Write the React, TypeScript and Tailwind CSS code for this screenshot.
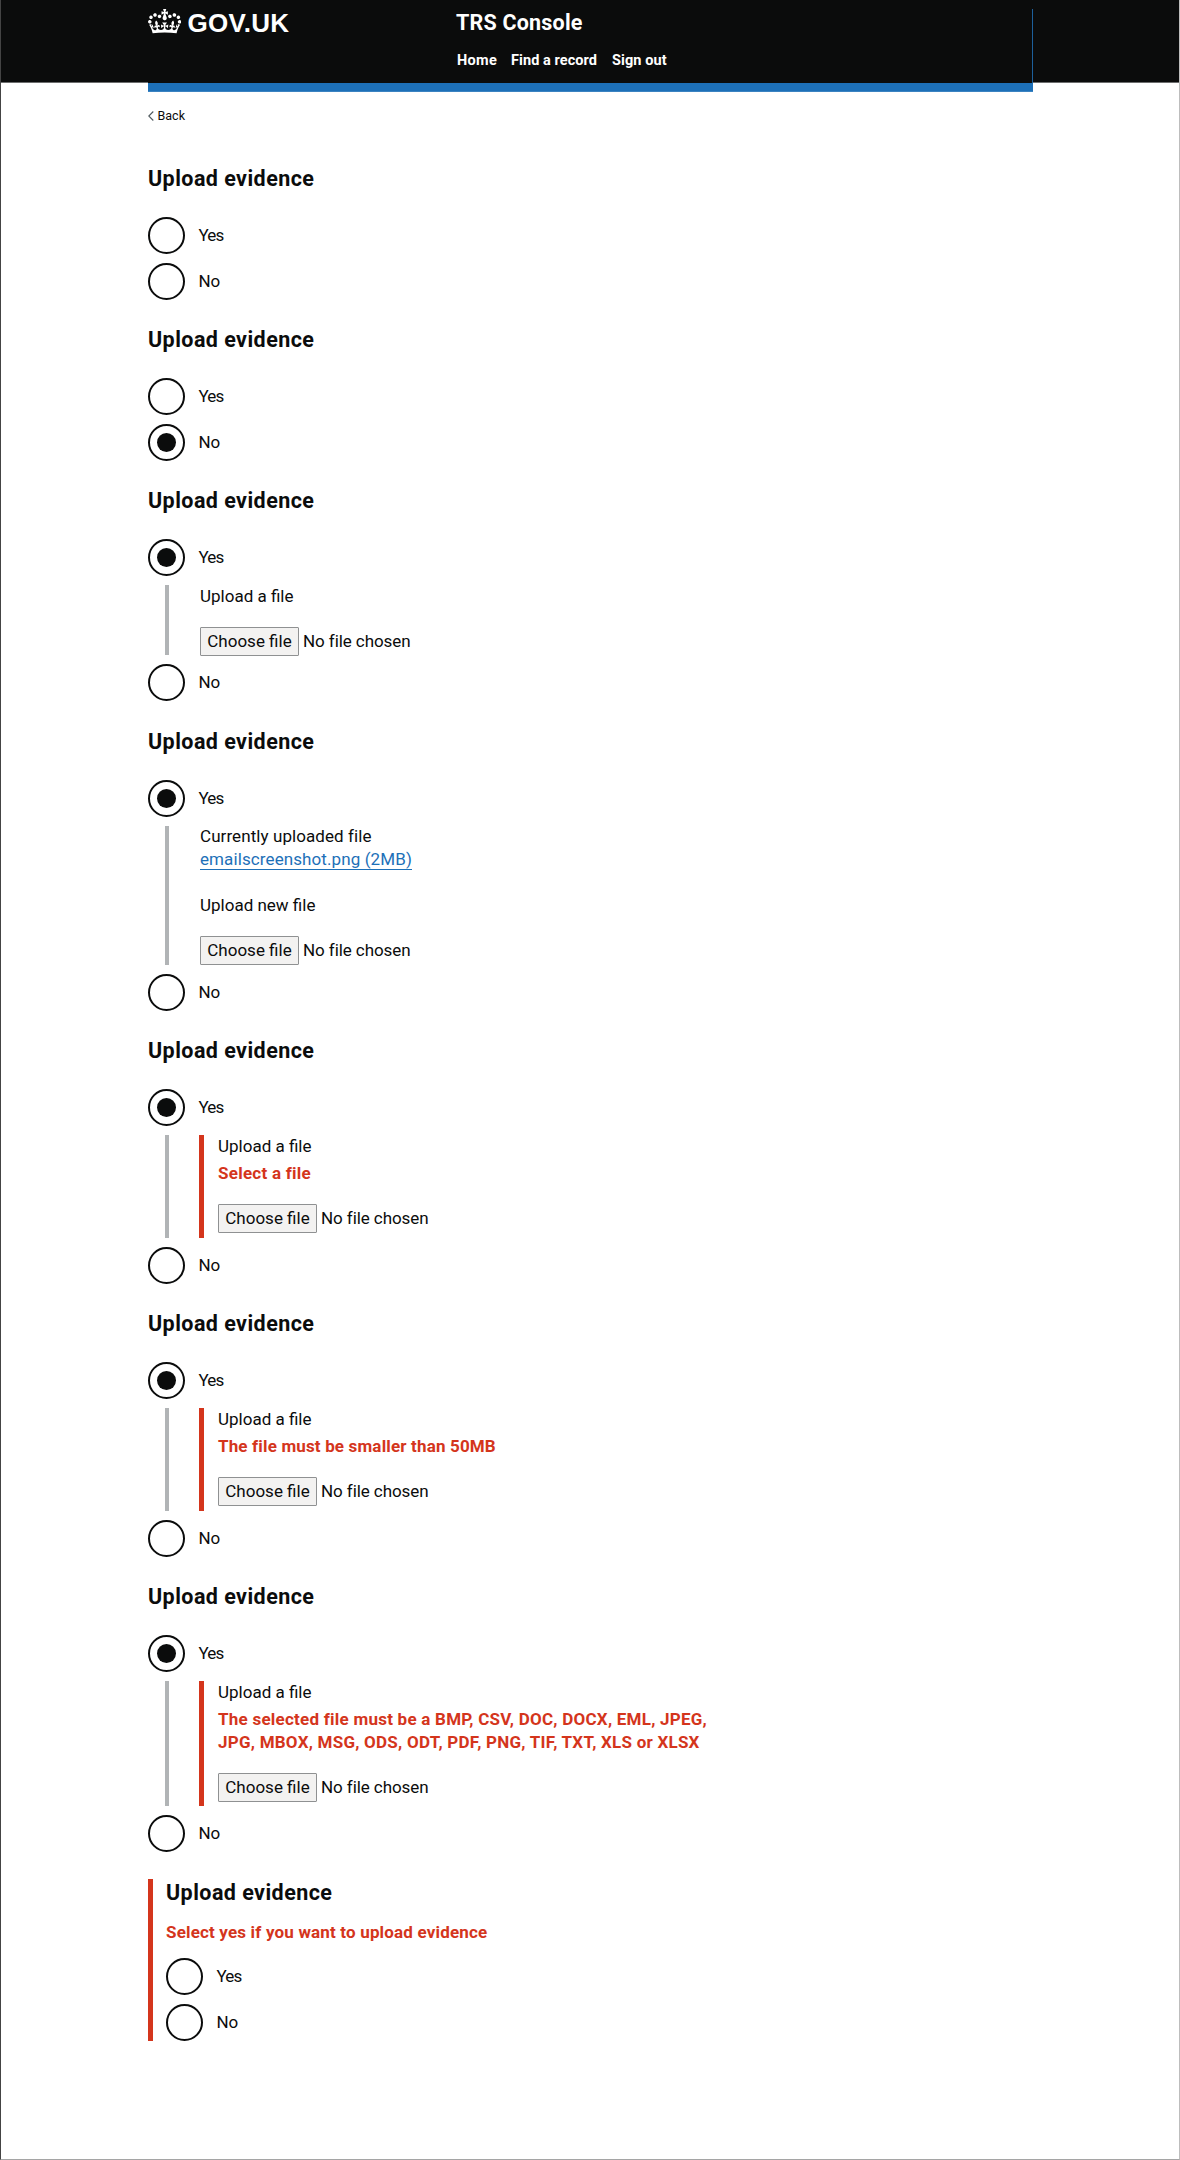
import type { ReactNode } from "react";

function Crown() {
  return (
    <svg viewBox="0 0 132 97" className="h-[24.5px] w-[33.4px] shrink-0" fill="currentColor" aria-hidden="true">
      <path d="M25 30.2c3.5 1.5 7.7-.2 9.1-3.7 1.5-3.6-.2-7.8-3.9-9.2-3.6-1.4-7.6.3-9.1 3.9-1.4 3.5.3 7.5 3.9 9zM9 39.5c3.6 1.5 7.8-.2 9.2-3.7 1.5-3.6-.2-7.8-3.9-9.1-3.6-1.5-7.6.2-9.1 3.8-1.4 3.5.3 7.5 3.8 9zM4.4 57.2c3.5 1.5 7.7-.2 9.1-3.8 1.5-3.6-.2-7.7-3.9-9.1-3.5-1.5-7.6.3-9.1 3.8-1.4 3.5.3 7.6 3.9 9.1zm38.3-21.4c3.5 1.5 7.7-.2 9.1-3.8 1.5-3.6-.2-7.7-3.9-9.1-3.6-1.5-7.6.3-9.1 3.8-1.3 3.6.4 7.7 3.9 9.1zm64.4-5.6c-3.6 1.5-7.8-.2-9.1-3.7-1.5-3.6.2-7.8 3.8-9.2 3.6-1.4 7.7.3 9.2 3.9 1.3 3.5-.4 7.5-3.9 9zm15.9 9.3c-3.6 1.5-7.7-.2-9.1-3.7-1.5-3.6.2-7.8 3.7-9.1 3.6-1.5 7.7.2 9.2 3.8 1.5 3.5-.3 7.5-3.8 9zm4.7 17.7c-3.6 1.5-7.8-.2-9.2-3.8-1.5-3.6.2-7.7 3.9-9.1 3.6-1.5 7.7.3 9.2 3.8 1.3 3.5-.4 7.6-3.9 9.1zM89.3 35.8c-3.6 1.5-7.8-.2-9.2-3.8-1.4-3.6.2-7.7 3.9-9.1 3.6-1.5 7.7.3 9.2 3.8 1.4 3.6-.3 7.7-3.9 9.1zM69.7 17.7l8.9 4.7V9.3l-8.9 2.8c-.2-.3-.5-.6-.9-.9L72.4 0H59.6l3.5 11.2c-.3.3-.6.5-.9.9l-8.8-2.8v13.1l8.8-4.7c.3.3.6.7.9.9l-5 15.4v.1c-.2.8-.4 1.6-.4 2.4 0 4.1 3.1 7.5 7 8.1h.2c.3 0 .7.1 1 .1.4 0 .7 0 1-.1h.2c4-.6 7.1-4.1 7.1-8.1 0-.8-.1-1.7-.4-2.4V34l-5.1-15.4c.4-.2.7-.6 1-.9zM66 92.8c16.9 0 32.8 1.1 47.1 3.2 4-16.9 8.9-26.7 14-33.5l-9.6-3.4c1 4.9 1.1 7.2 0 10.2-1.5-1.4-3-4.3-4.2-8.7L108.6 76c2.8-2 5-3.2 7.5-3.3-4.4 9.4-10 11.9-13.6 11.2-4.3-.8-6.3-4.6-5.6-7.9 1-4.7 5.7-5.9 8-.5 4.3-8.7-3-11.4-7.6-8.8 7.1-7.2 7.9-13.5 2.1-21.1-8 6.1-8.1 12.3-4.5 20.8-4.7-5.4-12.1-2.5-9.5 6.2 3.4-5.2 7.9-2 7.2 3.1-.6 4.3-6.4 7.8-13.5 7.2-10.3-.9-10.9-8-11.2-13.8 2.5-.5 7.1 1.8 11 7.3L80.2 60c-4.1 4.4-8 5.3-12.3 5.4 1.4-4.4 8-11.6 8-11.6H55.5s6.4 7.2 7.9 11.6c-4.2-.1-8-1-12.3-5.4l1.4 16.4c3.9-5.5 8.5-7.7 10.9-7.3-.3 5.8-.9 12.8-11.1 13.8-7.2.6-12.9-2.9-13.5-7.2-.7-5 3.8-8.3 7.1-3.1 2.7-8.7-4.6-11.6-9.4-6.2 3.7-8.5 3.6-14.7-4.6-20.8-5.8 7.6-5 13.9 2.2 21.1-4.7-2.6-11.9.1-7.7 8.8 2.3-5.5 7.1-4.2 8.1.5.7 3.3-1.3 7.1-5.7 7.9-3.5.7-9-1.8-13.5-11.2 2.5.1 4.7 1.3 7.5 3.3l-4.7-15.4c-1.2 4.4-2.7 7.2-4.3 8.7-1.1-3-.9-5.3 0-10.2l-9.5 3.4c5 6.9 9.9 16.7 14 33.5 14.8-2.1 30.8-3.2 47.7-3.2z" />
    </svg>
  );
}

function Header() {
  return (
    <header className="text-white">
      <div className="h-[83px] border-b border-[#6d6e6e] bg-[#0b0c0c]">
        <div className="ml-[147px] h-[83px] w-[885px] bg-[#0b0c0c] pt-[9px]">
          <div className="flex h-[74px] border-r border-[#1d609b]">
            <a className="flex w-[308px] items-start">
              <Crown />
              <span className="ml-[6px] font-['Liberation_Sans',sans-serif] text-[26px] leading-[28px] font-bold tracking-[0.3px]">
                GOV.UK
              </span>
            </a>
            <div>
              <div className="text-[21.5px] leading-[28px] font-bold tracking-[0.2px]">TRS Console</div>
              <nav className="mt-[14px] flex text-[14.5px] leading-[20px] font-bold">
                <a className="ml-px w-[54px] tracking-[0.35px]">Home</a>
                <a className="w-[101px] tracking-[0.07px]">Find a record</a>
                <a className="tracking-[0.1px]">Sign out</a>
              </nav>
            </div>
          </div>
        </div>
      </div>
      <div className="ml-[147px] h-[9px] w-[885px] border-b border-[#3b83c1] bg-[#1d70b8]" />
    </header>
  );
}

function Radio({ label, checked = false }: { label: string; checked?: boolean }) {
  return (
    <label className="flex h-[37px] items-center gap-[13.5px]">
      <span className="flex size-[37px] items-center justify-center rounded-full border-2 border-[#0b0c0c]">
        {checked && <span className="size-[18.5px] rounded-full bg-[#0b0c0c]" />}
      </span>
      <span className={label === "Yes" ? "tracking-[-0.8px]" : "tracking-[-0.2px]"}>{label}</span>
    </label>
  );
}

function FileInput() {
  return (
    <div className="flex h-[29px] items-center">
      <span className="flex h-[29px] w-[99px] items-center justify-center rounded-[1px] border border-[#8f9192] bg-[#f3f2f1]">
        Choose file
      </span>
      <span className="ml-[4px] tracking-[-0.08px]">No file chosen</span>
    </div>
  );
}

const heights = {
  plain: "h-[70px]",
  current: "h-[139px]",
  error: "h-[103px]",
  errorTall: "h-[125px]",
};

function Reveal({ size, error, children }: { size: keyof typeof heights; error?: ReactNode; children?: ReactNode }) {
  return (
    <div className={`my-[9px] ml-[17px] flex border-l-4 border-[#b1b4b6] ${heights[size]}`}>
      {error ? (
        <div className="ml-[30px] border-l-[5px] border-[#d4351c] pl-[14px]">
          <p>Upload a file</p>
          <p className="mt-[4px] mb-[19px] font-bold whitespace-nowrap text-[#d4351c]">{error}</p>
          <FileInput />
        </div>
      ) : (
        <div className="ml-[31px]">{children}</div>
      )}
    </div>
  );
}

function Section({ children }: { children: ReactNode }) {
  return (
    <section className="mb-[26px]">
      <h2 className="mb-[24px] text-[21.5px] leading-[28px] font-bold tracking-[0.45px]">Upload evidence</h2>
      {children}
    </section>
  );
}

const fileErrors: { text: ReactNode; size: keyof typeof heights }[] = [
  { text: <span className="tracking-[0.25px]">Select a file</span>, size: "error" },
  { text: <span className="tracking-[0.16px]">The file must be smaller than 50MB</span>, size: "error" },
  {
    text: (
      <span className="tracking-[0.24px]">
        The selected file must be a BMP, CSV, DOC, DOCX, EML, JPEG,
        <br />
        JPG, MBOX, MSG, ODS, ODT, PDF, PNG, TIF, TXT, XLS or XLSX
      </span>
    ),
    size: "errorTall",
  },
];

export default function App() {
  return (
    <div className="h-[2160px] overflow-hidden border-r border-b border-l border-r-[#bdbdbd] border-b-[#a5a5a5] border-l-[#444] bg-white font-[Roboto,sans-serif] text-[17px] leading-[23px] text-[#0b0c0c]">
      <Header />
      <main className="ml-[147px]">
        <a className="mt-[14px] flex h-[20px] items-center text-[12.5px] leading-[20px]">
          <svg viewBox="0 0 6 10" className="mr-[3.5px] h-[10px] w-[6px]" fill="none" stroke="#505a5f" strokeWidth="1.1">
            <path d="M5.3.5.8 5l4.5 4.5" />
          </svg>
          Back
        </a>

        <div className="mt-[39px]">
          <Section>
            <Radio label="Yes" />
            <div className="mt-[9px]"><Radio label="No" /></div>
          </Section>

          <Section>
            <Radio label="Yes" />
            <div className="mt-[9px]"><Radio label="No" checked /></div>
          </Section>

          <Section>
            <Radio label="Yes" checked />
            <Reveal size="plain">
              <p>Upload a file</p>
              <div className="mt-[19px]"><FileInput /></div>
            </Reveal>
            <Radio label="No" />
          </Section>

          <div className="h-px" />

          <Section>
            <Radio label="Yes" checked />
            <Reveal size="current">
              <div className="-mt-px">
                <p className="tracking-[0.08px]">Currently uploaded file</p>
                <a className="block h-[22px] w-[212px] border-b border-[#1d70b8] tracking-[0.1px] text-[#1d70b8]">
                  emailscreenshot.png (2MB)
                </a>
                <p className="mt-[24px]">Upload new file</p>
                <div className="mt-[19px]"><FileInput /></div>
              </div>
            </Reveal>
            <Radio label="No" />
          </Section>

          {fileErrors.map(({ text, size }, i) => (
            <Section key={i}>
              <Radio label="Yes" checked />
              <Reveal size={size} error={text} />
              <Radio label="No" />
            </Section>
          ))}

          <div className="mt-[27px] h-[162px] border-l-[5px] border-[#d4351c] pl-[13px]">
            <h2 className="text-[21.5px] leading-[28px] font-bold tracking-[0.45px]">Upload evidence</h2>
            <p className="mt-[14px] mb-[14px] font-bold tracking-[0.17px] text-[#d4351c]">
              Select yes if you want to upload evidence
            </p>
            <Radio label="Yes" />
            <div className="mt-[9px]"><Radio label="No" /></div>
          </div>
        </div>
      </main>
    </div>
  );
}
